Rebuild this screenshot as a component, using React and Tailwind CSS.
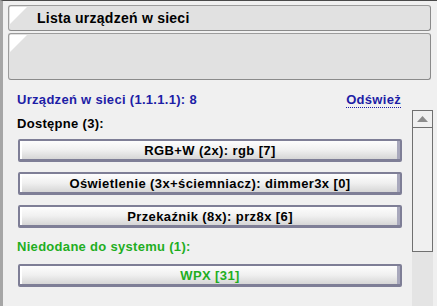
import React from "react";

function Btn({ children, green }) {
  return (
    <div
      className={
        "ml-[1px] h-[23px] flex items-center justify-center rounded-[2px] border-2 border-b-[3px] border-[#7e7e96] bg-gradient-to-b from-[#fdfdfd] via-[#f0f0f0] to-[#d6d6d6] shadow-[inset_2px_0_0_#ffffff,inset_-3px_0_0_#a8a8bc] text-[13px] font-bold tracking-[0.4px] leading-none " +
        (green ? "text-[#1fae1f]" : "text-black")
      }
    >
      {children}
    </div>
  );
}

function HeadBox({ h, children }) {
  return (
    <div
      className={
        "relative rounded-[3px] border border-[#9c9c9c] border-r-[#8a8a8a] border-b-[#8a8a8a] bg-[#e1e1e1] " + h
      }
    >
      <div className="absolute left-[1px] top-[1px] w-0 h-0 border-t-[17px] border-r-[17px] border-t-white border-r-transparent" />
      {children}
    </div>
  );
}

export default function App() {
  return (
    <div
      className="w-[437px] h-[306px] overflow-hidden bg-[#f0f0f0] border-t border-t-[#4a4a4a] border-l-[3px] border-l-[#a6a6a6] flex flex-col"
      style={{ fontFamily: '"Liberation Sans", Arial, sans-serif' }}
    >
      <div className="pl-[5px] pr-[6px] pt-[4px] flex flex-col gap-[2px]">
        <HeadBox h="h-[26px]">
          <div className="pl-[28px] pt-[5px] text-[14px] font-bold tracking-[0.25px] leading-[15px] text-black">
            Lista urządzeń w sieci
          </div>
        </HeadBox>
        <HeadBox h="h-[47px]" />
      </div>

      <div className="pl-[14px] w-[399px] mt-[12px] flex justify-between items-start">
        <div className="text-[13px] font-bold tracking-[0.3px] leading-[15px] text-[#1d1da6]">
          Urządzeń w sieci (1.1.1.1): 8
        </div>
        <div className="mr-[1px] text-[13px] font-bold tracking-[0.3px] leading-[15px] text-[#1d1da6] border-b border-dotted border-[#1d1da6]">
          Odśwież
        </div>
      </div>

      <div className="flex flex-1 mt-[2px]">
        <div className="pl-[14px] w-[399px] flex flex-col">
          <div className="mt-[6px] text-[13px] font-bold tracking-[0.3px] leading-[15px] text-black">
            Dostępne (3):
          </div>
          <div className="mt-[8px] flex flex-col gap-[10px]">
            <Btn>RGB+W (2x): rgb [7]</Btn>
            <Btn>Oświetlenie (3x+ściemniacz): dimmer3x [0]</Btn>
            <Btn>Przekaźnik (8x): prz8x [6]</Btn>
          </div>
          <div className="mt-[11px] text-[13px] font-bold tracking-[0.3px] leading-[15px] text-[#1fae1f]">
            Niedodane do systemu (1):
          </div>
          <div className="mt-[10px]">
            <Btn green>WPX [31]</Btn>
          </div>
        </div>

        <div className="ml-[10px] w-[21px] flex flex-col">
          <div className="h-[18px] border border-[#707070] bg-[#f0f0f0] flex items-center justify-center">
            <svg width="11" height="6" viewBox="0 0 11 6">
              <polygon points="0,6 5.5,0 11,6" fill="#8c8c8c" />
            </svg>
          </div>
          <div className="h-[125px] -mt-[1px] border border-[#707070] bg-[#f0f0f0]" />
          <div className="flex-1 bg-[#e4e4e4]" />
        </div>
      </div>
    </div>
  );
}
